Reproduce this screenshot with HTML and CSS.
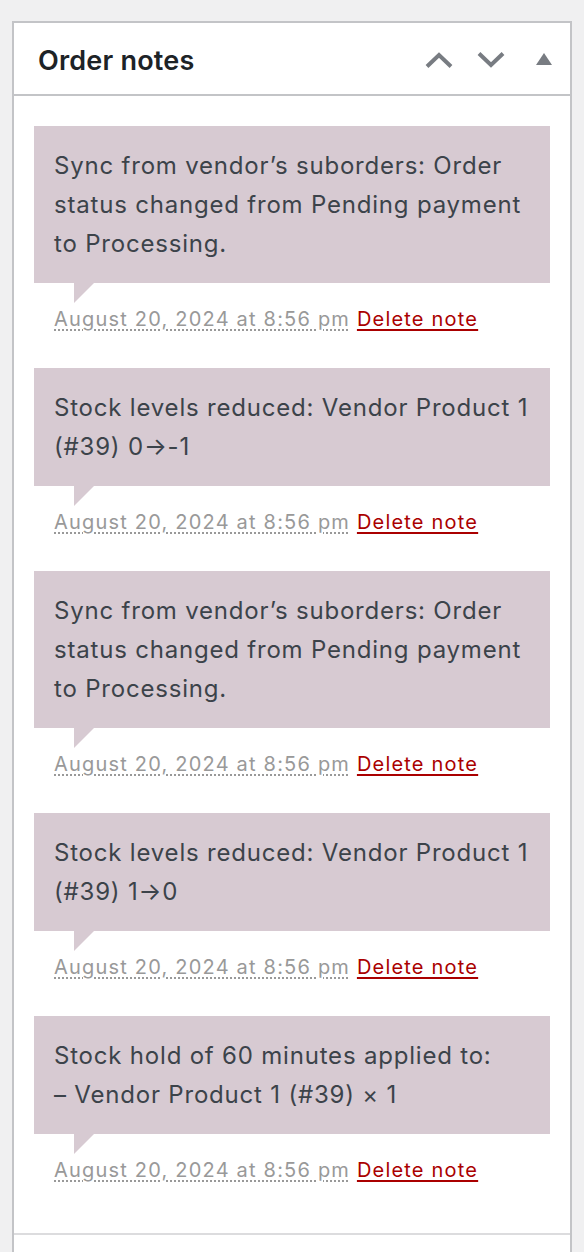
FILE: index.html
```html
<!DOCTYPE html>
<html lang="en">
<head>
<meta charset="utf-8">
<title>Order notes</title>
<link rel="stylesheet" href="styles.css">
</head>
<body>
<div class="postbox">
  <div class="postbox-header">
    <h2 class="title">Order notes</h2>
    <div class="actions">
      <span class="icon-btn">
        <svg width="28" height="16" viewBox="0 0 28 16"><path d="M2 14.5 L14 3 L26 14.5" fill="none" stroke="#787c82" stroke-width="4"/></svg>
      </span>
      <span class="icon-btn">
        <svg width="28" height="16" viewBox="0 0 28 16"><path d="M2 1.5 L14 13 L26 1.5" fill="none" stroke="#787c82" stroke-width="4"/></svg>
      </span>
      <span class="icon-btn toggle">
        <svg width="16" height="12" viewBox="0 0 16 12"><path d="M8 0 L16 12 L0 12 Z" fill="#787c82"/></svg>
      </span>
    </div>
  </div>
  <ul class="order-notes">
    <li class="note">
      <div class="note-content"><p>Sync from vendor’s suborders: Order status changed from Pending payment to Processing.</p></div>
      <p class="meta"><abbr class="exact-date" title="2024-08-20 20:56:00">August 20, 2024 at 8:56 pm</abbr> <a href="#" class="delete-note">Delete note</a></p>
    </li>
    <li class="note">
      <div class="note-content"><p>Stock levels reduced: Vendor Product 1 (#39) 0→-1</p></div>
      <p class="meta"><abbr class="exact-date" title="2024-08-20 20:56:00">August 20, 2024 at 8:56 pm</abbr> <a href="#" class="delete-note">Delete note</a></p>
    </li>
    <li class="note">
      <div class="note-content"><p>Sync from vendor’s suborders: Order status changed from Pending payment to Processing.</p></div>
      <p class="meta"><abbr class="exact-date" title="2024-08-20 20:56:00">August 20, 2024 at 8:56 pm</abbr> <a href="#" class="delete-note">Delete note</a></p>
    </li>
    <li class="note">
      <div class="note-content"><p>Stock levels reduced: Vendor Product 1 (#39) 1→0</p></div>
      <p class="meta"><abbr class="exact-date" title="2024-08-20 20:56:00">August 20, 2024 at 8:56 pm</abbr> <a href="#" class="delete-note">Delete note</a></p>
    </li>
    <li class="note">
      <div class="note-content"><p>Stock hold of 60 minutes applied to:<br>– Vendor Product 1 (#39) × 1</p></div>
      <p class="meta"><abbr class="exact-date" title="2024-08-20 20:56:00">August 20, 2024 at 8:56 pm</abbr> <a href="#" class="delete-note">Delete note</a></p>
    </li>
  </ul>
  <div class="add-note"></div>
</div>
</body>
</html>
```
FILE: styles.css
```css
html {
  overflow: hidden;
}
body {
  margin: 0;
  background: #f0f0f1;
  font-family: Inter, "Noto Sans", sans-serif;
  padding: 21px 12px 0 12px;
}
.postbox {
  background: #fff;
  border: 2px solid #c3c4c7;
  border-bottom: none;
}
.postbox-header {
  display: flex;
  align-items: center;
  justify-content: space-between;
  height: 71px;
  border-bottom: 2px solid #c3c4c7;
  padding: 0 18px 0 24px;
}
.title {
  margin: 0;
  font-size: 27px;
  font-weight: 600;
  letter-spacing: 0.2px;
  color: #1d2327;
  line-height: 1;
  padding-top: 3px;
}
.actions {
  display: flex;
  align-items: center;
  gap: 24px;
  padding-top: 2px;
}
.icon-btn {
  display: flex;
  align-items: center;
}
.icon-btn.toggle {
  margin-left: 7px;
  margin-top: -2px;
}
.order-notes {
  list-style: none;
  margin: 0;
  padding: 30px 20px 26px 20px;
  display: flex;
  flex-direction: column;
  gap: 12px;
}
.note-content {
  position: relative;
  background: #d7cad2;
  padding: 20px;
  color: #3c434a;
  font-size: 24px;
  letter-spacing: 0.8px;
  line-height: 39px;
}
.note-content p {
  margin: 0;
}
.note-content::after {
  content: "";
  position: absolute;
  left: 40px;
  bottom: -20px;
  width: 0;
  height: 0;
  border-style: solid;
  border-width: 20px 20px 0 0;
  border-color: #d7cad2 transparent transparent transparent;
}
.meta {
  margin: 0;
  padding: 20px;
  font-size: 20px;
  letter-spacing: 1.2px;
  line-height: 33px;
  color: #999;
}
.exact-date {
  text-decoration: underline dotted;
  text-decoration-thickness: 2px;
  text-underline-offset: 3px;
}
.delete-note {
  color: #a00;
  text-decoration: underline;
  text-decoration-thickness: 2px;
  text-underline-offset: 3px;
}
.add-note {
  border-top: 2px solid #dcdcde;
  height: 200px;
}
```
